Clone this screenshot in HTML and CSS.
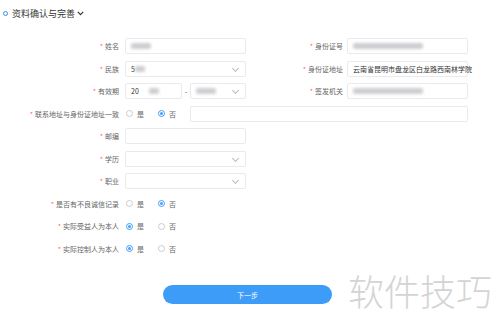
FILE: index.html
```html
<!DOCTYPE html>
<html lang="zh">
<head>
  <meta charset="UTF-8">
  <title>资料确认与完善</title>
  <link rel="stylesheet" href="styles.css">
</head>
<body>

  <!-- 标题 -->
  <div class="section-title">
    <span class="dot"></span>
    <span>资料确认与完善</span>
    <svg class="title-arrow" width="7" height="5" viewBox="0 0 7 5"><path d="M0.8 0.9 L3.5 3.6 L6.2 0.9" fill="none" stroke="#333" stroke-width="1.2"/></svg>
  </div>

  <div class="form">
    <!-- 第一行 -->
    <label class="label"><i>*</i>姓名</label>
    <div class="input"><span class="blur blur-m"></span></div>
    <label class="label label-r"><i>*</i>身份证号</label>
    <div class="input"><span class="blur blur-xl"></span></div>

    <label class="label"><i>*</i>民族</label>
    <div class="input select"><span class="val">5</span><span class="blur blur-s"></span></div>
    <label class="label label-r"><i>*</i>身份证地址</label>
    <div class="input"><span class="val">云南省昆明市盘龙区白龙路西南林学院</span></div>

    <label class="label"><i>*</i>有效期</label>
    <div class="date-range">
      <div class="input date"><span class="val">20</span><span class="blur blur-gap"></span><span class="blur blur-s"></span></div>
      <span class="dash">-</span>
      <div class="input select"><span class="blur blur-m"></span></div>
    </div>
    <label class="label label-r"><i>*</i>签发机关</label>
    <div class="input"><span class="blur blur-xl"></span></div>

    <label class="label"><i>*</i>联系地址与身份证地址一致</label>
    <div class="wide">
      <div class="radios">
        <span class="radio"><span class="circle"></span>是</span>
        <span class="radio"><span class="circle on"></span>否</span>
      </div>
      <div class="input grow"></div>
    </div>

    <label class="label"><i>*</i>邮编</label>
    <div class="input"></div>
    <div class="empty"></div>

    <label class="label"><i>*</i>学历</label>
    <div class="input select"></div>
    <div class="empty"></div>

    <label class="label"><i>*</i>职业</label>
    <div class="input select"></div>
    <div class="empty"></div>

    <label class="label"><i>*</i>是否有不良诚信记录</label>
    <div class="radios">
      <span class="radio"><span class="circle"></span>是</span>
      <span class="radio"><span class="circle on"></span>否</span>
    </div>
    <div class="empty"></div>

    <label class="label"><i>*</i>实际受益人为本人</label>
    <div class="radios">
      <span class="radio"><span class="circle on"></span>是</span>
      <span class="radio"><span class="circle"></span>否</span>
    </div>
    <div class="empty"></div>

    <label class="label"><i>*</i>实际控制人为本人</label>
    <div class="radios">
      <span class="radio"><span class="circle on"></span>是</span>
      <span class="radio"><span class="circle"></span>否</span>
    </div>
    <div class="empty"></div>
  </div>

  <button class="next-btn">下一步</button>

  <!-- 水印 -->
  <div class="watermark">软件技巧</div>

</body>
</html>
```

FILE: styles.css
```css
* {
  box-sizing: border-box;
  margin: 0;
  padding: 0;
}

body {
  font-family: "Noto Sans CJK SC", "Noto Sans", sans-serif;
  background: #fff;
  color: #333;
  width: 500px;
  height: 329px;
  overflow: hidden;
  position: relative;
}

.section-title {
  height: 26px;
  display: flex;
  align-items: center;
  padding-left: 3px;
  font-size: 9px;
  color: #333;
}

.dot {
  width: 5px;
  height: 5px;
  border: 1.3px solid #3a8ee6;
  border-radius: 50%;
  margin-right: 4px;
}

.title-arrow {
  margin-left: 2px;
}

.form {
  margin-top: 9px;
  display: grid;
  grid-template-columns: 125px 121px 101px 121px;
  grid-auto-rows: 22.5px;
  align-items: center;
  font-size: 7px;
}

.label {
  text-align: right;
  padding-right: 6px;
  color: #666;
  white-space: nowrap;
}

.label i {
  font-style: normal;
  color: #f56c6c;
  margin-right: 2px;
}

.label-r {
  padding-right: 4px;
}

.input {
  height: 16px;
  border: 1px solid #e8eaee;
  border-radius: 2px;
  display: flex;
  align-items: center;
  padding-left: 5px;
  position: relative;
  background: #fff;
}

.select::after {
  content: "";
  position: absolute;
  right: 7px;
  top: 4px;
  width: 4px;
  height: 4px;
  border-right: 1px solid #b8bcc2;
  border-bottom: 1px solid #b8bcc2;
  transform: rotate(45deg);
}

.val {
  color: #333;
  white-space: nowrap;
}

.blur {
  display: inline-block;
  height: 6px;
  background: #c2c2c6;
  filter: blur(1.4px);
  border-radius: 2px;
  opacity: 0.8;
}

.blur-s { width: 10px; }
.blur-m { width: 20px; }
.blur-xl { width: 70px; }
.blur-gap { width: 0; margin-left: 10px; }

.date-range {
  display: flex;
  align-items: center;
}

.date {
  width: 57px;
}

.dash {
  width: 8px;
  text-align: center;
  color: #555;
}

.date-range .select {
  flex: 1;
}

.wide {
  grid-column: 2 / 5;
  display: flex;
  align-items: center;
}

.grow {
  flex: 1;
}

.radios {
  display: flex;
  align-items: center;
  width: 65px;
  padding-left: 1px;
  color: #666;
}

.radio {
  display: flex;
  align-items: center;
  width: 32px;
}

.circle {
  width: 7px;
  height: 7px;
  border: 1px solid #c8cbd0;
  border-radius: 50%;
  margin-right: 4px;
  position: relative;
}

.circle.on {
  border-color: #409eff;
}

.circle.on::after {
  content: "";
  position: absolute;
  left: 1px;
  top: 1px;
  width: 3px;
  height: 3px;
  border-radius: 50%;
  background: #409eff;
}

.empty {
  grid-column: 3 / 5;
}

.next-btn {
  display: block;
  margin: 25px 0 0 163px;
  width: 169px;
  height: 19px;
  border: none;
  border-radius: 10px;
  background: #3d9cf7;
  color: #fff;
  font-family: "Noto Sans CJK SC", sans-serif;
  font-size: 7px;
}

.watermark {
  position: absolute;
  left: 348px;
  top: 268px;
  font-size: 36px;
  font-weight: 300;
  line-height: 44px;
  color: #d4d4d4;
}
```
